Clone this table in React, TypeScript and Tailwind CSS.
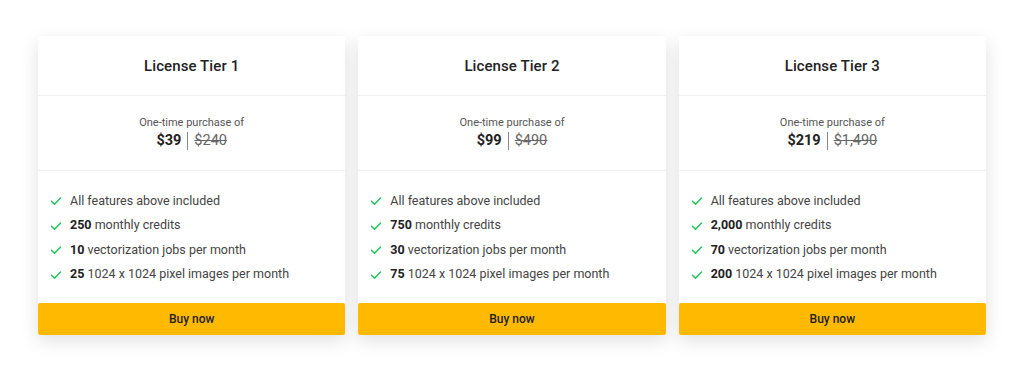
const tiers = [
  {
    name: "License Tier 1",
    price: "$39",
    was: "$240",
    credits: "250",
    jobs: "10",
    images: "25",
  },
  {
    name: "License Tier 2",
    price: "$99",
    was: "$490",
    credits: "750",
    jobs: "30",
    images: "75",
  },
  {
    name: "License Tier 3",
    price: "$219",
    was: "$1,490",
    credits: "2,000",
    jobs: "70",
    images: "200",
  },
];

function Check() {
  return (
    <svg width="12" height="12" viewBox="0 0 24 24" fill="none" stroke="#22c55e" strokeWidth="3" strokeLinecap="round" strokeLinejoin="round" className="shrink-0">
      <path d="M3 12.5l6 6L21 6" />
    </svg>
  );
}

function Feature({ bold, text }: { bold?: string; text: string }) {
  return (
    <li className="flex items-center gap-[8px] h-[24.5px]">
      <Check />
      <span>
        {bold && <b className="font-bold text-[#222]">{bold} </b>}
        {text}
      </span>
    </li>
  );
}

export default function App() {
  return (
    <main className="w-[1024px] h-[369px] bg-white flex justify-center pt-[36px] font-['Roboto',sans-serif]">
      <div className="grid grid-cols-3 gap-[13px] w-[948px] h-[299px]">
        {tiers.map((t) => (
          <div key={t.name} className="flex flex-col bg-white rounded-[3px] shadow-[0_6px_18px_rgba(0,0,0,0.12)]">
            <div className="h-[60px] flex items-center justify-center border-b border-[#f1f1f1] pt-[1px]">
              <h2 className="text-[15px] font-medium text-[#222] tracking-[0.1px]">{t.name}</h2>
            </div>
            <div className="h-[75px] flex flex-col items-center justify-center border-b border-[#f1f1f1]">
              <p className="text-[11px] text-[#555] leading-[14px]">One-time purchase of</p>
              <div className="flex items-center text-[14.5px] leading-[20px] mt-[1px]">
                <span className="font-bold text-[#222]">{t.price}</span>
                <span className="w-px h-[18px] bg-[#888] mx-[6px]" />
                <span className="line-through text-[#666]">{t.was}</span>
              </div>
            </div>
            <ul className="flex-1 pl-[12px] pt-[18px] text-[12.5px] text-[#444]">
              <Feature text="All features above included" />
              <Feature bold={t.credits} text="monthly credits" />
              <Feature bold={t.jobs} text="vectorization jobs per month" />
              <Feature bold={t.images} text="1024 x 1024 pixel images per month" />
            </ul>
            <button className="h-[32px] w-full bg-[#ffb900] rounded-[2px] text-[12px] font-medium text-[#222]">
              Buy now
            </button>
          </div>
        ))}
      </div>
    </main>
  );
}
